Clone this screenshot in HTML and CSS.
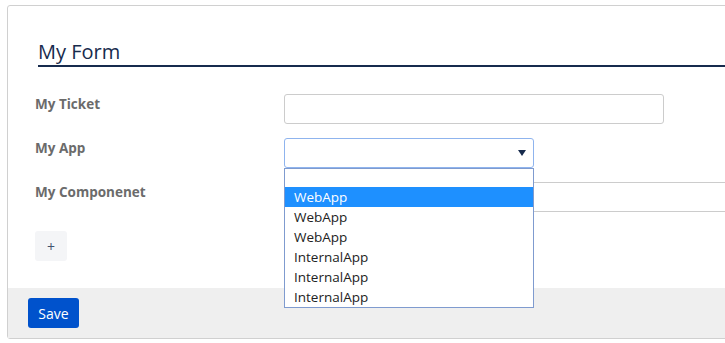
FILE: index.html
```html
<html>
  <head>
    <link rel="stylesheet" href="styles.css">
  </head>
  <body>
    <div class="card">
      <div class="card-body">
        <h2 class="title">My Form</h2>

        <div class="row">
          <label class="label" for="ticket">My Ticket</label>
          <input class="field field-ticket" id="ticket" type="text">
        </div>

        <div class="row">
          <label class="label">My App</label>
          <div class="select-wrap">
            <div class="select">
              <svg class="arrow" width="8" height="6" viewBox="0 0 8 6"><path d="M0 0 H8 L4 6 Z" fill="#172b4d"/></svg>
            </div>
            <!-- open option list of the select -->
            <ul class="options">
              <li class="option blank"></li>
              <li class="option active">WebApp</li>
              <li class="option">WebApp</li>
              <li class="option">WebApp</li>
              <li class="option">InternalApp</li>
              <li class="option">InternalApp</li>
              <li class="option">InternalApp</li>
            </ul>
          </div>
        </div>

        <div class="row">
          <label class="label" for="component">My Componenet</label>
          <input class="field field-wide" id="component" type="text">
        </div>

        <button class="add" type="button">+</button>
      </div>

      <div class="card-footer">
        <button class="save" type="submit">Save</button>
      </div>
    </div>
  </body>
</html>
```

FILE: styles.css
```css
html{
  overflow: hidden;
}
body{
  margin: 0;
  font-family: 'Open Sans', 'Noto Sans', sans-serif;
  background-color: white;
}
.card{
  margin: 5px 0 0 7px;
  width: 780px;
  height: 334px;
  box-sizing: border-box;
  border: 1px solid #d0d0d0;
  border-radius: 3px;
  display: flex;
  flex-direction: column;
}
.card-body{
  flex: 1;
  padding: 0 0 0 27px;
}
.title{
  margin: 34px 0 0 3px;
  padding-bottom: 1px;
  font-size: 20px;
  line-height: 24px;
  font-weight: normal;
  color: #172b4d;
  border-bottom: 2px solid #172b4d;
}
.row{
  display: flex;
  align-items: flex-start;
  margin-top: 14px;
}
.row:first-of-type{
  margin-top: 27px;
}
.label{
  width: 249px;
  flex-shrink: 0;
  padding-top: 1px;
  font-size: 13.5px;
  font-weight: bold;
  color: #6b6b6b;
}
.field{
  height: 30px;
  box-sizing: border-box;
  border: 1px solid #cccccc;
  border-radius: 3px;
  outline: none;
  padding: 4px 8px;
}
.field-ticket{
  width: 380px;
}
.field-wide{
  flex: 1;
}
.select-wrap{
  position: relative;
}
.select{
  width: 250px;
  height: 30px;
  box-sizing: border-box;
  border: 1px solid #8fb4ee;
  border-radius: 3px;
  display: flex;
  align-items: center;
  justify-content: flex-end;
  padding-right: 7px;
}
.options{
  position: absolute;
  top: 30px;
  left: 0;
  z-index: 2;
  width: 250px;
  box-sizing: border-box;
  margin: 0;
  padding: 0;
  list-style: none;
  background-color: white;
  border: 1px solid #7f9bcf;
}
.option{
  height: 20px;
  line-height: 20px;
  padding-left: 9px;
  font-size: 13.5px;
  color: #222222;
}
.option.blank{
  height: 18px;
}
.option.active{
  background-color: #1e90ff;
  color: white;
}
.add{
  margin-top: 19px;
  width: 32px;
  height: 30px;
  border: none;
  border-radius: 3px;
  background-color: #f4f5f7;
  color: #42526e;
  font-family: 'Open Sans', sans-serif;
  font-size: 14px;
  cursor: pointer;
}
.card-footer{
  height: 50px;
  background-color: #efefef;
  padding: 10px 0 0 20px;
  box-sizing: border-box;
}
.save{
  width: 51px;
  height: 30px;
  border: none;
  border-radius: 3px;
  background-color: #0052cc;
  color: white;
  font-family: 'Open Sans', sans-serif;
  font-size: 14px;
  cursor: pointer;
}
```
